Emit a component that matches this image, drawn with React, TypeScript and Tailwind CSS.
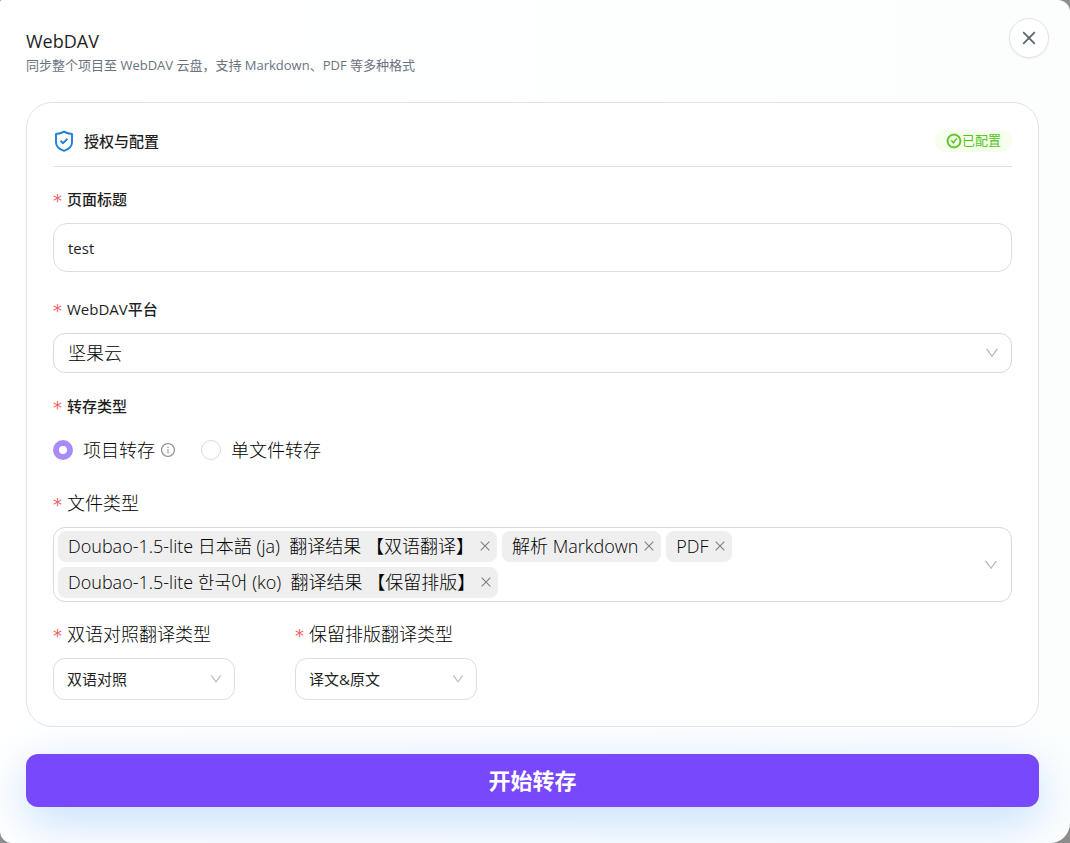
import { useState } from 'react'
import type { ReactNode } from 'react'
import { AiOutlineCheckCircle, AiOutlineClose, AiOutlineDown, AiOutlineInfoCircle } from 'react-icons/ai'

const initialTags = [
    'Doubao-1.5-lite 日本語 (ja)  翻译结果 【双语翻译】',
    '解析 Markdown',
    'PDF',
    'Doubao-1.5-lite 한국어 (ko)  翻译结果 【保留排版】',
]

function Required() {
    return <span aria-hidden="true" className="mr-1 w-[10px] pt-1 font-['DejaVu_Sans'] text-lg font-normal leading-6 text-[#f26366]">*</span>
}

function FieldLabel({ htmlFor, strong, children }: { htmlFor: string; strong?: boolean; children: ReactNode }) {
    return (
        <label htmlFor={htmlFor} className={`flex h-6 items-center ${strong ? 'text-[15px] font-medium' : 'text-lg font-light text-black'}`}>
            <Required />
            {children}
        </label>
    )
}

function SelectBox({ id, options, className, chevron }: { id: string; options: string[]; className: string; chevron: string }) {
    return (
        <div className="relative mt-3">
            <select id={id} className={`w-full appearance-none rounded-xl border bg-white outline-none ${className}`}>
                {options.map((option) => (
                    <option key={option}>{option}</option>
                ))}
            </select>
            <AiOutlineDown className={`pointer-events-none absolute inset-y-0 right-3 my-auto text-[#b8b8b8] ${chevron}`} />
        </div>
    )
}

export default function App() {
    const [title, setTitle] = useState('test')
    const [mode, setMode] = useState('project')
    const [tags, setTags] = useState(initialTags)

    const radioClass = 'size-5 appearance-none rounded-full border border-[#d9d9d9] bg-white checked:border-[6px] checked:border-[#a78bfa]'

    return (
        <div className="min-h-screen bg-[#8c8c8c] font-['Open_Sans','Noto_Sans_CJK_SC',sans-serif] text-[#1f1f1f]">
            <main className="relative min-h-screen overflow-hidden rounded-tl-xs rounded-tr-[12px] rounded-br-[20px] rounded-bl-[12px] bg-linear-to-r from-white to-[#fcfefe] pt-[29px] pr-[31px] pb-9 pl-[26px]">
                <button
                    type="button"
                    aria-label="关闭"
                    className="absolute top-[18px] right-[21px] flex size-10 items-center justify-center rounded-full border border-[#dfe3ec] bg-white text-[#5b616b] shadow-xs"
                >
                    <svg viewBox="0 0 14 14" className="size-[14px]" fill="none" stroke="currentColor" strokeWidth="1.7">
                        <path d="M1.2 1.2l11.6 11.6M12.8 1.2l-11.6 11.6" />
                    </svg>
                </button>

                <header>
                    <h1 className="text-lg leading-6">WebDAV</h1>
                    <p className="text-[13px] leading-6 text-[#6b7280]">同步整个项目至 WebDAV 云盘，支持 Markdown、PDF 等多种格式</p>
                </header>

                <section className="mt-[25px] rounded-[26px] border border-[#dfe3e8] bg-white p-[26px]">
                    <div className="flex items-center justify-between border-b border-[#dfe3e6] pb-[13px]">
                        <h2 className="flex h-6 items-center gap-[9px] text-[15px] font-medium">
                            <svg viewBox="0 0 22 22" className="size-[22px]" fill="none" stroke="#1a7fe0" strokeWidth="1.9" strokeLinejoin="round">
                                <path d="M11 1.6Q14.500 3.8 19 4v8.500c0 4-4 7-8 8.400-4-1.400-8-4.400-8-8.400V4Q7.500 3.800 11 1.600z" />
                                <path d="M7.600 10.800l2.500 2.400 4.300-4.400" />
                            </svg>
                            授权与配置
                        </h2>
                        <span className="flex h-[22px] items-center rounded-full bg-[#f6ffed] px-[11px] text-[13px] text-[#52c41a]">
                            <AiOutlineCheckCircle className="size-4" strokeWidth={40} />
                            已配置
                        </span>
                    </div>

                    <div className="mt-5">
                        <FieldLabel htmlFor="page-title" strong>页面标题</FieldLabel>
                        <input
                            id="page-title"
                            value={title}
                            onChange={(e) => setTitle(e.target.value)}
                            className="mt-3 block h-[49px] w-full rounded-[14px] border border-[#dedede] bg-white px-[14px] text-[15px] outline-none"
                        />
                    </div>

                    <div className="mt-[25px]">
                        <FieldLabel htmlFor="platform" strong>WebDAV平台</FieldLabel>
                        <SelectBox id="platform" options={['坚果云']} className="h-10 border-[#d9d9d9] px-[14px] text-lg font-light text-black" chevron="size-4" />
                    </div>

                    <div className="mt-[21px]">
                        <FieldLabel htmlFor="mode-project" strong>转存类型</FieldLabel>
                        <div className="mt-4 flex h-8 items-center text-lg font-light text-black">
                            <input id="mode-project" type="radio" name="mode" checked={mode === 'project'} onChange={() => setMode('project')} className={radioClass} />
                            <label htmlFor="mode-project" className="ml-[10px]">项目转存</label>
                            <AiOutlineInfoCircle className="ml-[5px] size-4 text-[#8a8f96]" />
                            <input id="mode-file" type="radio" name="mode" checked={mode === 'file'} onChange={() => setMode('file')} className={`ml-[25px] ${radioClass}`} />
                            <label htmlFor="mode-file" className="ml-[10px]">单文件转存</label>
                        </div>
                    </div>

                    <div className="mt-[25px]">
                        <FieldLabel htmlFor="file-types">文件类型</FieldLabel>
                        <div className="mt-3 flex items-center rounded-xl border border-[#d9d9d9] bg-white py-[3px] pr-3 pl-1">
                            <ul className="flex flex-1 flex-wrap gap-[5px]">
                                {tags.map((tag) => (
                                    <li key={tag} className="flex h-[31px] items-center gap-1 rounded-lg bg-[#efefef] pr-[5px] pb-0.5 pl-[10px] text-lg font-light text-black">
                                        <span className="whitespace-pre">{tag}</span>
                                        <button type="button" aria-label={`移除 ${tag}`} onClick={() => setTags(tags.filter((t) => t !== tag))}>
                                            <AiOutlineClose className="size-[14px] text-[#808080]" />
                                        </button>
                                    </li>
                                ))}
                            </ul>
                            <button id="file-types" type="button" aria-label="展开文件类型">
                                <AiOutlineDown className="size-4 text-[#b8b8b8]" />
                            </button>
                        </div>
                    </div>

                    <div className="mt-5 flex gap-[60px]">
                        <div className="w-[182px]">
                            <FieldLabel htmlFor="bilingual">双语对照翻译类型</FieldLabel>
                            <SelectBox id="bilingual" options={['双语对照']} className="h-[42px] border-[#dedede] px-[13px] text-[15px]" chevron="size-[14px]" />
                        </div>
                        <div className="w-[182px]">
                            <FieldLabel htmlFor="layout">保留排版翻译类型</FieldLabel>
                            <SelectBox id="layout" options={['译文&原文']} className="h-[42px] border-[#dedede] px-[13px] text-[15px]" chevron="size-[14px]" />
                        </div>
                    </div>
                </section>

                <button type="button" className="mt-[27px] h-[53px] w-full rounded-xl bg-[#7849fc] text-[22px] font-bold text-white shadow-[0_14px_50px_#c0dcfc]">
                    开始转存
                </button>
            </main>
        </div>
    )
}
